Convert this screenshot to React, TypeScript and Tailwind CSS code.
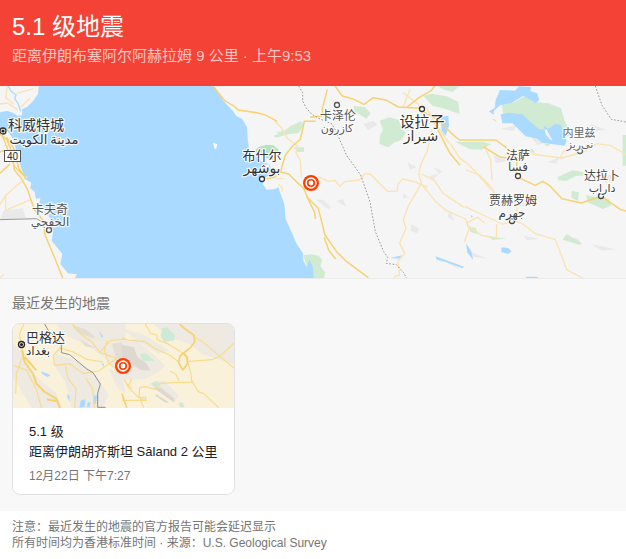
import React from 'react';

const MAP_FONT = '"Noto Sans CJK SC", "DejaVu Sans", sans-serif';

type City = {
  zh: string;
  ar: string;
  x: number;
  y: number;
  ax: number;
  ay: number;
  size: number;
  arSize: number;
  cx: number;
  cy: number;
  color: string;
  capital?: boolean;
};

// label positions are in map pixels
const CITIES: City[] = [
  { zh: '科威特城', ar: 'مدينة الكويت', x: 36, y: 130, ax: 44, ay: 144, size: 14, arSize: 13, cx: 3, cy: 131, capital: true, color: '#333' },
  { zh: '卡夫奇', ar: 'الخفجي', x: 50, y: 214, ax: 50, ay: 226, size: 12, arSize: 12, cx: 49, cy: 230, color: '#555' },
  { zh: '布什尔', ar: 'بوشهر', x: 262, y: 160, ax: 262, ay: 173, size: 13, arSize: 14, cx: 262, cy: 179, color: '#333' },
  { zh: '卡泽伦', ar: 'كازرون', x: 338, y: 120, ax: 337, ay: 132, size: 12, arSize: 11, cx: 337, cy: 105, color: '#555' },
  { zh: '设拉子', ar: 'شیراز', x: 422, y: 127, ax: 421, ay: 141, size: 15, arSize: 14, cx: 422, cy: 109, color: '#333' },
  { zh: '内里兹', ar: 'نی‌ریز', x: 579, y: 137, ax: 580, ay: 148, size: 11, arSize: 11, cx: 580, cy: 151, color: '#666' },
  { zh: '法萨', ar: 'فسا', x: 518, y: 160, ax: 518, ay: 171, size: 12, arSize: 12, cx: 518, cy: 176, color: '#444' },
  { zh: '达拉卜', ar: 'داراب', x: 602, y: 180, ax: 602, ay: 192, size: 12, arSize: 11, cx: 601, cy: 196, color: '#444' },
  { zh: '贾赫罗姆', ar: 'جهرم', x: 513, y: 205, ax: 512, ay: 217, size: 12, arSize: 12, cx: 512, cy: 221, color: '#444' },
];

function Epicenter({ x, y }: { x: number; y: number }) {
  return (
    <g transform={`translate(${x} ${y})`}>
      <circle r="8" fill="#ff3d00" />
      <circle r="4.9" fill="none" stroke="#fff" strokeWidth="1.6" />
      <circle r="2.4" fill="#fff" />
    </g>
  );
}

function CityLabel({ city }: { city: City }) {
  return (
    <g fontFamily={MAP_FONT}>
      <circle cx={city.cx} cy={city.cy} r={city.capital ? 3 : 2.5} fill="#fff" stroke={city.color} strokeWidth="1.3" />
      {city.capital && <circle cx={city.cx} cy={city.cy} r="1.6" fill="#222" />}
      <g fill={city.color} stroke="#fff" strokeWidth="2.4" strokeOpacity="0.85" paintOrder="stroke" strokeLinejoin="round" textAnchor="middle">
        <text x={city.x} y={city.y} fontSize={city.size}>{city.zh}</text>
        <text x={city.ax} y={city.ay} fontSize={city.arSize} direction="rtl">{city.ar}</text>
      </g>
    </g>
  );
}

function MainMap() {
  return (
    <svg className="block h-48 w-full bg-[#f5f5f5]" viewBox="0 6 1878 576" preserveAspectRatio="xMidYMid slice" role="img" aria-label="地震位置地图">
      {/* gulf */}
      <path fill="#aadaff" d="M117 0L114 30L100 50L82 68L66 76L67 94L52 95L40 87L22 81L0 85V135L20 138L40 165L50 205L60 240L75 285L94 296L91 313L104 324L108 345L122 341L118 355L145 390L160 440L155 470L187 510L181 540L204 568L231 571L220 590H940L926 560L910 530L909 508L890 480L875 445L857 405L853 360L840 325L835 310L823 316L800 317L788 300L797 280L820 265L807 240L788 235L765 213L748 202L743 165L741 130L727 105L710 97L698 80L670 50L635 0Z" />
      <path fill="#fff" d="M639 176l13 5l-4 14l-5-2zM797 245l8-5 3 8-8 4z" />
      <path fill="none" stroke="#aadaff" strokeWidth="4" d="M25 6l8 16 15 10-4 12 10 14 8 24" />
      {/* relief */}
      <g fill="#e9e9e9">
        <path d="M10 380l58-7 10 29-78 6z" />
        <path d="M946 345l25 3 22 21-9 7zM1010 352l18-7 11 24zM1090 120l32-10 9 12-26 17zM1222 235l28 15-20 6zM1285 278l31-10-16 20zM1233 420l25 15-8 13-17-8zM1350 380l14 32-22-14zM1300 250l28 12-10 8zM1330 530l58 18-20 3zM1210 328l17 13-19 2z" />
        <path d="M1415 505l50 20-50-8zM1570 455l48 9-36 5zM1540 365l40-10-8 12zM1590 155l70 15-48 13zM1640 235l40-15-11 19zM1480 213l43 18-35 7zM1705 465l40 21-11-24zM1770 480l80 16-44 3zM1500 135l50-12-9 18zM1770 120l50 18-41 4zM1810 270l48 10-42 18z" />
      </g>
      {/* parks */}
      <g fill="#d0ebd2">
        <path fill="#b9e2bb" d="M765 210l-2-8 12-13 25-7 20 2 15 12 2 10-15 4 0 20z" />
        <path d="M828 145l25-5 20-15 30-13 8 10-15 25-32 4-36 10-8-6 16-5zM880 190l32 0 0 13-18 1z" />
        <path d="M910 513l25-2 22 5 10 13-6 16 15 21-5 18h-27l-17-38-8-2z" />
        <path d="M1061 66l33 3 18 19-13 16-37-23zM1139 110l30-10 27 8 8 22 13 16-13 22-22 8-17 14-27-10 2-27 9-16-6-16z" />
        <path d="M1270 35l25-6 45 8 35 17 4 36-50-17-32-8zM1313 6h66l-22 18-28-8zM1365 173h85l23 8-27 16-36-1-20-10z" />
        <path d="M1505 60l38-5 32-20 22 18 48 5 38 15 12 42 25 42-50 0-15-18-40 0-26-11-46-36-33 0z" />
        <path d="M1672 280l45-21 18 2 40 12-48 3-28 15-24-2zM1715 320l22 5-3 26-20-10zM1758 334l70 11 5 20-25 10-45-20zM1868 153h20v92h-20zM1475 105l10 0 5 10zM1700 450l46 28-8 4-51-15zM1460 456l60 8-42 4zM1408 430l20 1 5 20-23-8zM1630 182l25-6-11 11zM1558 200l40-5 7 10-36 5z" />
      </g>
      {/* lakes */}
      <g fill="#aadaff">
        <path d="M1500 18l45 2 12-13 36 2-2 13 20 5 7 20-11 11-37-23-35 22-35 7-18 16-1 13-14-11 17-10 3-24zM1502 91l25-5 40 5 15 15 35 29 17 2-3-13 15 10 19-14 17 3 11 25 7 25-7 12-67-9-14-12-35-7-40-39-30 0z" />
        <path fill="#f5f5f5" d="M1634 138l6-2 8 16 10 18-8-4-12-14z" />
        <path d="M1320 100l25-5 2 30-10 30-12-15-2-23zM1170 522l36-8-8 10zM1307 517l40 15 45 16-4 5-48-18-30-8zM1504 490l20 2 11 10-11 8-20-6zM1398 478l16 24 6 26-18-22zM1580 578l30 0 10 6h-45zM928 528l10 18 4 36h-16l-11-20zM1413 393l6 4-5 6z" />
      </g>
      {/* minor roads */}
      <g fill="none" stroke="#fbe3b0" strokeWidth="4" strokeLinejoin="round">
        <path d="M0 60l22-3 31 20M22 6l-5 35 25 20M50 28l50-14M62 70l28-28M0 362l17-28 65-57M17 334l0 45 75-32M0 581l12-10" />
        <path d="M825 112l18 18 20 34 30 22-5 20 13 25 3 50M835 300l12 12v12M830 284h20" />
        <path d="M955 278l30 14 20-3 15 18 14-14 45-5 15-18 17 0 32 32 20 20h28l3-22 15-15 40 10 34 15M1296 135l-14 65-18 38-8 30 8 30-40 70-14 40 8 25-19 45 15 30-20 25 5 40-15 5 15 45M1264 300l45 55 30 25 58 25 10 30-14 40M1264 270l40 20 25 38 60 40 15 2M1210 26l45 35 20 40M1230 16l-20 52M1280 70l20 40 48 68" />
        <path d="M1350 178l30 45 28 20 45 50 18 24M1450 180l22 48 4 60M1400 370l42 20 65 30 42-9 20 10 37 28 60 18 20 52 14 38 50 26M1400 417l32-17 22 17M1490 420l-1 42-44-8-45-32M1552 370l-4 30M1398 258l40 15 38 40 25 50M1595 210l90 12 65-18 40-25 40 5 50 28M1680 224l10-22 55-12" />
      </g>
      {/* main roads */}
      <g fill="none" stroke="#f7d272" strokeWidth="4.5" strokeLinejoin="round">
        <path d="M0 150l20 16 15 36 8 55 20 25 20 35 20 60 25 30 7 45 30 72 30 75M20 160l25 40 10 50 22 32M7 155l10 25 27 68 26 26M0 268l30-28M0 204l15-5" />
        <path d="M639 6l35 44 30 18 10 10 55 8 25 6 38 20M800 284l23-4 18-16 15-50 22-28 23-20 12-54h34M841 264l25 6 25 25 20 18 12 28 32 32 20 80 35 50 30 30 65 48M912 313l10 28 22 44 2 20M972 460l15 40 20 25" />
        <path d="M930 100l38-5 20-6M968 94l-1-20 15-58M1005 6l22 30 30 8 35 17 28-20 40 8 35 20 63 4 20 15 40 20 36 40 24 20h110l60 45M1220 70l38-30 35-20 20-25M1300 110l30 60 20 38 30 36" />
        <path d="M1450 188l48 30 52 10 0 50 56 26 22-12 20 12 38 40 58 13 60-20 58 40 34 8" />
      </g>
      {/* borders */}
      <g fill="none" stroke="#9b9b9b" strokeWidth="3">
        <path d="M0 407l110-3 20 12" stroke="#999" />
        <path strokeDasharray="5 5" d="M896 6l12 20v25l10 20 18 20 20 12 40 17 18 35 26 60 42 58 28 80 16 90 25 60 12 17 -4 18 30 4 22 24 20 40M1786 6l20 58 28 42 44 8" />
      </g>
      <g transform="translate(0 -252) scale(3)">
        {CITIES.map((city) => <CityLabel key={city.zh} city={city} />)}
        <rect x="4.5" y="150.5" width="16" height="11" fill="#fff" stroke="#555" />
        <text x="12.5" y="160" fontSize="10" textAnchor="middle" fontFamily="Roboto, sans-serif" fill="#333">40</text>
        <Epicenter x={311} y={183} />
      </g>
    </svg>
  );
}

function RecentMap() {
  return (
    <svg className="block h-21 w-full bg-[#f9f1d9]" viewBox="39 132 663 252" preserveAspectRatio="xMidYMid slice" role="img" aria-label="伊朗胡齐斯坦地图">
      {/* west half */}
      <g transform="translate(36 126)">
        <g fill="#eee9e1">
          <path d="M0 60l30 30 20 50 40 40 40 30 20 50H60L0 160zM130 0h210v140l-50-20-60-50-70-30zM130 95l50 15 50 30 30 30 30 50-20 40h-90l-20-80-30-45zM290 140l40 15 10 60-25-20z" />
        </g>
        <path fill="#e3ddd4" d="M180 10l40 12 30 22-10 4-45-18zM200 50l50 28-30-5zM300 65l40-5v60l-30-15z" />
        <path fill="#aadaff" d="M88 148l28 12-10 5-16-10zM206 236l14-5-2 24-16 2zM243 221l12 0-3 24-9 2zM165 215l7 6 1 18-6-10zM268 124l8 2-2 8zM260 25l14 20-5 2zM228 240l8 2-4 14h-8z" />
        <g fill="none" stroke="#f8dc8c" strokeWidth="3.5" strokeLinejoin="round">
          <path d="M36 6l-14 30 5 30 8 30-22 60-2 60M4 130l40 15 30 60 15 55M128 130l-4-30 20-22 40 12 40 22 50 8M128 130l45-5 42 30 45-8 60-42M160 130l8 40 24 30-4 58M222 170l20 30 6 60M180 4l26 32 35 25 22 30 32-35 45-5M285 56l-8 30 12 35 25 20M265 92l50 18" />
        </g>
        <path fill="none" stroke="#f6d172" strokeWidth="6" strokeLinejoin="round" d="M30 85l8 35 25 35 10 30 25 25 35 20 12 30M38 105l35 40M105 232l30 6" />
        <path fill="none" stroke="#8f8f8f" strokeWidth="3" d="M98 6l10 18 40 40 0 28 25 6 50 42 20 12 22 34-8 28v42h24" />
      </g>
      {/* east half */}
      <g transform="translate(366 126)">
        <g fill="#eee9e1">
          <path d="M95 6h241v120l-35-10-60-20-40-30-60-20zM0 60l40-10 45 40 45 40-20 20-40 20L0 175zM0 20l60 15 80 50-30 10-80-50zM80 185l45-10 45 45-10 20z" />
        </g>
        <path fill="#ddd8d0" d="M0 68l35 8 12 30 28 20 10 20-30-2-25-18-30-4zM95 198l20-2 22 18 20 15-2 12-25-18zM100 215l40 25-8 3-30-20z" />
        <path fill="#f9f1d9" d="M195 110l10-8 10 10-12 8z" />
        <path fill="#ceead6" d="M120 18l15-2 23 22 0 17-32 5-10-17zM52 97l18-3 28 22-34 2zM88 184l16-7 12 10-18 12zM170 242l12 0 6 14h-14z" />
        <g fill="none" stroke="#f8dc8c" strokeWidth="3.5" strokeLinejoin="round">
          <path d="M0 48l18 6 50 5 30 20 44 20 28 20M70 6l15 28 20 5 0 14 32 12 45 28 10 12 15 48 2 28h-42l-50 3-18 18-26-8-20 2-2 32 20 6 0-8-22 0-30-30-12-22M209 175l20 34 16 6 45 42M200 118l70-5 24-10 42-40M215 44l34 20 45 40 42 34M145 148l16 8 10 20M0 235h75M60 225l-5 8 10 24M18 195l10-25M30 200l-20-20" />
        </g>
        <path fill="none" stroke="#f6d172" strokeWidth="5" strokeLinejoin="round" d="M172 6l14 12 30 22 2 20-12 16-32 26-4 20 12 22 14-18 0-20-12-14M0 215l14 42" />
      </g>
      <g transform="translate(0 -840) scale(3)" fontFamily={MAP_FONT} fill="#333">
        <circle cx="21.5" cy="344.5" r="3" fill="#fff" stroke="#222" strokeWidth="1.3" />
        <circle cx="21.5" cy="344.5" r="1.6" fill="#222" />
        <g stroke="#fff" strokeWidth="2.4" strokeOpacity="0.8" paintOrder="stroke" strokeLinejoin="round">
          <text x="26" y="342" fontSize="13">巴格达</text>
          <text x="26" y="355" fontSize="12" textAnchor="end" direction="rtl">بغداد</text>
        </g>
        <Epicenter x={123} y={366} />
      </g>
    </svg>
  );
}

export default function App() {
  return (
    <main className="bg-white font-['Liberation_Sans','Noto_Sans_CJK_SC',sans-serif]">
      <header className="bg-[#f44336] px-3 pt-3 pb-5 text-white">
        <h1 className="text-2xl leading-[30px]">5.1 级地震</h1>
        <p className="mt-1 text-[15px] leading-5 text-white/70">距离伊朗布塞阿尔阿赫拉姆 9 公里 · 上午9:53</p>
      </header>
      <MainMap />

      <section className="border-t border-[#ebebeb] bg-[#f8f8f8] px-3 pt-3 pb-4">
        <h2 className="text-sm leading-6 text-[#757575]">最近发生的地震</h2>
        <a href="#saland" className="mt-2 block w-[223px] overflow-hidden rounded-lg border border-[#dfe1e5] bg-white">
          <RecentMap />
          <div className="px-4 pt-[14px] pb-2">
            <p className="text-[13px] leading-5 text-[#212121]">5.1 级</p>
            <p className="text-[13px] leading-5 whitespace-nowrap text-[#212121]">距离伊朗胡齐斯坦 Sāland 2 公里</p>
            <p className="mt-1 text-xs leading-5 text-[#757575]">12月22日 下午7:27</p>
          </div>
        </a>
      </section>

      <footer className="px-3 py-2 text-xs leading-4 text-[#757575]">
        <p>注意：最近发生的地震的官方报告可能会延迟显示</p>
        <p>所有时间均为香港标准时间 · 来源：<a href="https://earthquake.usgs.gov">U.S. Geological Survey</a></p>
      </footer>
    </main>
  );
}
